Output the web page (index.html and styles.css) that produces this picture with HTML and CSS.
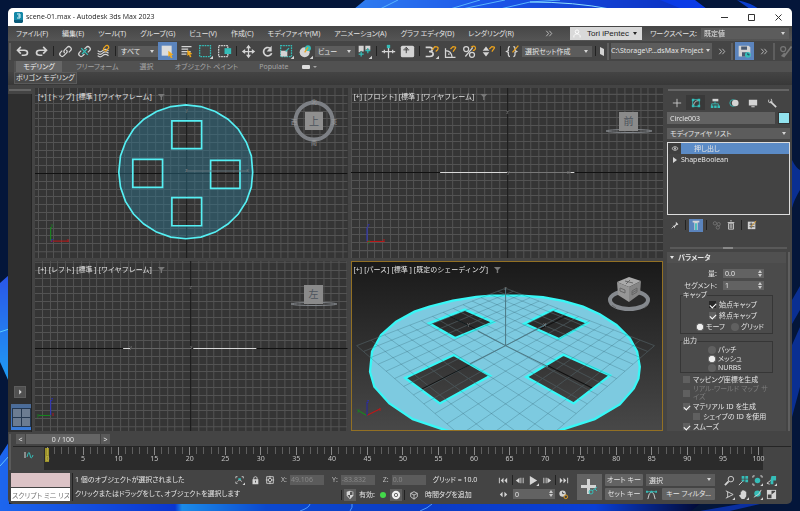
FILE: index.html
```html
<!DOCTYPE html>
<html lang="ja">
<head>
<meta charset="utf-8">
<title>scene-01.max - Autodesk 3ds Max 2023</title>
<link rel="stylesheet" href="styles.css">
</head>
<body>
<svg class="wallpaper" viewBox="0 0 800 511" preserveAspectRatio="none" aria-hidden="true">
  <defs>
    <linearGradient id="wpTop" x1="0" x2="1"><stop offset="0" stop-color="#2f7df0"/><stop offset=".4" stop-color="#1c55e8"/><stop offset="1" stop-color="#0a2fc0"/></linearGradient>
    <linearGradient id="wpLeft" x1="0" x2="0" y1="0" y2="1"><stop offset="0" stop-color="#2a55e8"/><stop offset="1" stop-color="#1f9df5"/></linearGradient>
    <linearGradient id="wpBottom" x1="0" x2="1"><stop offset="0" stop-color="#1d66ee"/><stop offset=".25" stop-color="#0a36cf"/><stop offset=".26" stop-color="#1b8be8"/><stop offset=".38" stop-color="#0c49cf"/><stop offset=".6" stop-color="#0c3cc4"/><stop offset=".85" stop-color="#0a3fd6"/><stop offset="1" stop-color="#020a35"/></linearGradient>
  </defs>
  <rect width="800" height="511" fill="#04163a"/>
  <path d="M354 9 365 0H680l14 9z" fill="url(#wpTop)"/>
  <path d="M380 9 398 0M450 9 480 0M462 9 505 0M500 9 530 2 560 0" stroke="#58b4ff" fill="none"/>
  <path d="M530 2q45 0 80 7" stroke="#8adcff" fill="none"/>
  <path d="M660 0h35l12 9h-25z" fill="#0b3be6"/>
  <path d="M737 0q14 3 22 9h-9z" fill="#0b3fd0"/>
  <path d="M792 160q4 8 8 10v20q-6 10-8 18zM792 300l8-14v24l-8 14zM792 345l8-18v60l-8 30z" fill="#0a2f92"/>
  <path d="M0 283 9 275V382L0 362z" fill="url(#wpLeft)"/>
  <path d="M0 332 9 329" stroke="#58cbff"/>
  <path d="M0 511V456l9-14v62h691l-9 7z" fill="url(#wpBottom)"/>
  <path d="M0 466 9 456" stroke="#63c4ff"/>
  <path d="M420 511q8-3 12-7M300 511q9-3 10-7M350 511q3-4 2-7" stroke="#4f9cff" fill="none"/>
  <path d="M700 511l40-7h20l-30 7z" fill="#0a2fa0"/>
</svg>

<div class="window">
  <header class="titlebar">
    <svg class="app-icon" viewBox="0 0 9 11"><path d="M1 0h7l1 1v9H0V1z" fill="#1488a8"/><path d="M0 8h9v2l-1 1H1l-1-1z" fill="#0b5a78"/><path d="M3 2h3v4H3M4 4h2" stroke="#d8f4fa" fill="none"/></svg>
    <h1>scene-01.max - Autodesk 3ds Max 2023</h1>
    <button class="caption" aria-label="最小化"><svg viewBox="0 0 9 9"><path d="M1 4.500h7" /></svg></button>
    <button class="caption" aria-label="最大化"><svg viewBox="0 0 9 9"><path d="M1.500 1.500h6v6h-6z"/></svg></button>
    <button class="caption" aria-label="閉じる"><svg viewBox="0 0 9 9"><path d="M1.500 1.500l6 6M7.500 1.500l-6 6"/></svg></button>
  </header>

  <nav class="menubar">
    <div class="menus">
      <a href="#">ファイル(F)</a><a href="#">編集(E)</a><a href="#">ツール(T)</a><a href="#">グループ(G)</a><a href="#">ビュー(V)</a><a href="#">作成(C)</a><a href="#">モディファイヤ(M)</a><a href="#">アニメーション(A)</a><a href="#">グラフ エディタ(D)</a><a href="#">レンダリング(R)</a>
    </div>
    <button class="more" aria-label="その他"><svg viewBox="0 0 9 9"><path d="M1 1l3 3.500L1 8M5 1l3 3.500L5 8"/></svg></button>
    <button class="user"><svg viewBox="0 0 9 9"><circle cx="4.500" cy="2.500" r="2"/><path d="M1 9V7l2-2h3l2 2v2"/></svg><span>Tori iPentec</span><i class="tri"></i></button>
    <label for="workspace">ワークスペース:</label>
    <div class="drop workspace"><select id="workspace"><option>既定値</option></select></div>
  </nav>

  <div class="toolbar">
    <i class="grip"></i>
    <button class="tool" aria-label="元に戻す"><svg viewBox="0 0 18 18"><path class="s2" d="M3.500 7.500H11q4 0 4 3t-4 3H8M7 3.500l-4 4 4 4"/></svg></button>
    <button class="tool" aria-label="やり直し"><svg viewBox="0 0 18 18"><path class="s2" d="M14.500 7.500H7q-4 0-4 3t4 3h3M11 3.500l4 4-4 4"/></svg></button>
    <i class="sep"></i>
    <button class="tool" aria-label="リンク"><svg viewBox="0 0 18 18"><path class="s" d="M8 11q-2-2 0-4l3-3q2-2 4 0t0 4l-2 2M10 7q2 2 0 4l-3 3q-2 2-4 0t0-4l2-2"/></svg></button>
    <button class="tool" aria-label="リンク解除"><svg viewBox="0 0 18 18"><path class="s" d="M9 6l2-2q2-2 4 0t0 4l-2 2M9 12l-2 2q-2 2-4 0t0-4l2-2"/><path class="t" d="M5 5l8 8M12 6l-6 6"/></svg></button>
    <button class="tool" aria-label="スペースワープにバインド"><svg viewBox="0 0 18 18"><path class="s" d="M2 8q3 3 6 0t7 0M2 11q3 3 6 0t7 0M2 14q3 3 6 0t7 0"/><path class="o" d="M10 8q-2-2 0-4l2-2q2-1 3 1t-1 3l-3 3"/></svg></button>
    <i class="sep"></i>
    <div class="drop short"><select aria-label="選択フィルタ"><option>すべて</option></select></div>
    <button class="tool on" aria-label="選択"><svg viewBox="0 0 18 18"><path d="M2 2h12v12H2z" fill="#dcdcdc"/><path class="of" d="M10 8l6 5-2.500.5 1.500 3-2 .5-1-3-2 1.500z"/></svg></button>
    <button class="tool" aria-label="名前で選択"><svg viewBox="0 0 18 18"><path class="s" d="M3 3h12M3 6h8M3 9h11M3 12h6"/><path class="of" d="M10 7l6 5-2.500.5 1.500 3-2 .5-1-3-2 1.500z"/></svg></button>
    <button class="tool" aria-label="矩形選択領域"><svg viewBox="0 0 18 18"><path class="t" stroke-dasharray="2 1" d="M2 2h13v13H2z"/><path class="w" d="M18 14v4h-4z"/></svg></button>
    <button class="tool" aria-label="窓交差"><svg viewBox="0 0 18 18"><path class="s" stroke-dasharray="2 1" d="M2 2h11v13H2z"/><path class="tf" d="M9 5h8v7H9z"/></svg></button>
    <i class="sep"></i>
    <button class="tool" aria-label="移動"><svg viewBox="0 0 18 18"><path class="s" d="M9 3v12M3 9h12"/><path class="w" d="M9 1l3 4H6zM9 17l3-4H6zM1 9l4-3v6zM17 9l-4-3v6z"/></svg></button>
    <button class="tool" aria-label="回転"><svg viewBox="0 0 18 18"><path class="s2" d="M12 5A5 5 0 1 0 14 11"/><path class="w" d="M14 2v7H8z"/></svg></button>
    <button class="tool" aria-label="スケール"><svg viewBox="0 0 18 18"><path class="t" stroke-dasharray="2 1" d="M2 2h13v13H2z"/><path class="w" d="M2 8h8v7H2zM18 14v4h-4z"/><path class="t" d="M8 9l4-4"/></svg></button>
    <button class="tool" aria-label="配置"><svg viewBox="0 0 18 18"><circle cx="8" cy="10" r="6" class="w"/><circle cx="12" cy="5" r="3.500" class="tf"/><path class="o" d="M12 4l-4 6"/><path class="w" d="M18 14v4h-4z"/></svg></button>
    <div class="drop short"><select aria-label="参照座標系"><option>ビュー</option></select></div>
    <button class="tool" aria-label="基点中心"><svg viewBox="0 0 18 18"><path class="w" d="M2 2h6v7H6L5 8l-2 2H2zM10 2h6v5h-2l-1-2-2 2h-1zM18 14v4h-4z"/><path class="t" d="M5 9v6M2 12h6M13 5v6M10 8h6"/></svg></button>
    <i class="sep"></i>
    <button class="tool" aria-label="操作"><svg viewBox="0 0 18 18"><path class="s" d="M9 4v13M1 9h16M4 7v4M14 7v4"/><path class="tf" d="M7 1h4v4H7z"/></svg></button>
    <button class="tool" aria-label="キーボード ショートカット"><svg viewBox="0 0 18 18"><rect x="1" y="2" width="16" height="14" rx="2" class="w"/><path d="M7.500 4v7M4 7h7M5.500 6l2-2 2 2" stroke="#333" fill="none"/></svg></button>
    <i class="sep"></i>
    <button class="tool" aria-label="スナップ"><svg viewBox="0 0 18 18"><path class="s2" d="M2 4h5q3 0 3 2.500T6 9q5 0 5 3t-4 3H2"/><path class="o" d="M10 7l3-4q4 0 4 2t-3 4"/><path class="w" d="M18 14v4h-4z"/></svg></button>
    <button class="tool" aria-label="角度スナップ"><svg viewBox="0 0 18 18"><path class="s" d="M3 5v11h12M3 8q7 0 8 8M6 12h2"/><path class="o" d="M9 6l3-3q4 0 3 2l-3 4"/></svg></button>
    <button class="tool" aria-label="パーセント スナップ"><svg viewBox="0 0 18 18"><circle class="s" cx="5" cy="6" r="3"/><circle class="s" cx="12" cy="13" r="3"/><path class="s" d="M13 4L4 15"/><path class="o" d="M11 4q4-3 5 0t-3 4"/></svg></button>
    <button class="tool" aria-label="スピナー スナップ"><svg viewBox="0 0 18 18"><path class="w" d="M6 3l4 5H2zM6 15l4-5H2z"/><path class="o" d="M10 6l3-3q4 0 3 2l-3 4"/></svg></button>
    <i class="sep"></i>
    <button class="tool" aria-label="名前付き選択セット"><svg viewBox="0 0 18 18"><path class="s" d="M6 3Q4 3 4 5v3L2 9l2 1v3q0 2 2 2M10 3q2 0 2 2v3l2 1-2 1v3q0 2-2 2"/><path class="o" d="M16 2l-7 8"/></svg></button>
    <div class="drop long"><select aria-label="選択セット"><option>選択セット作成</option></select></div>
    <i class="sep"></i>
    <svg class="mirror" viewBox="0 0 5 12"><path class="w" d="M1 2l4 2v7L1 9z"/></svg>
    <i class="grip"></i>
    <div class="drop project"><select aria-label="プロジェクト"><option>C:\Storage\P...dsMax Project</option></select></div>
    <button class="more" aria-label="その他のツール"><svg viewBox="0 0 9 9"><path d="M1 1l3 3.500L1 8M5 1l3 3.500L5 8"/></svg></button>
    <i class="grip"></i>
    <button class="tool on" aria-label="自動バックアップ"><svg viewBox="0 0 18 18"><path class="w" d="M2 2h12l2 2v11H2z"/><path d="M5 3h7v4H5zM6 10h7v5H6z" fill="#4a5a70"/><circle cx="13" cy="13" r="3.500" class="tf"/><path d="M13 11v2h2" stroke="#224" fill="none"/></svg></button>
    <button class="more" aria-label="その他の保存"><svg viewBox="0 0 9 9"><path d="M1 1l3 3.500L1 8M5 1l3 3.500L5 8"/></svg></button>
    <i class="grip"></i>
    <button class="tool dim" aria-label="ブラシ"><svg viewBox="0 0 18 18"><circle class="s" cx="5" cy="6" r="3"/><path class="s2" d="M15 3l-6 8-3 4-2-1 3-3"/></svg></button>
  </div>

  <div class="ribbon">
    <div class="tabs">
      <button class="tab active">モデリング</button><button class="tab">フリーフォーム</button><button class="tab">選択</button><button class="tab">オブジェクト ペイント</button><button class="tab">Populate</button><i class="pill"></i><i class="tri"></i>
    </div>
    <div class="subtabs"><button>ポリゴン モデリング</button></div>
  </div>

  <div class="workarea">
    <aside class="layouts">
      <i class="hgrip"></i>
      <div class="layout-strip">
        <button class="expand" aria-label="展開"><svg viewBox="0 0 12 12"><path class="w" d="M5 3l3 3-3 3z"/></svg></button>
        <button class="quad" aria-label="4 画面レイアウト"><i></i><i></i><i></i><i></i></button>
      </div>
    </aside>

    <main class="viewports">
      <section class="view">
        <svg class="scene" viewBox="0 0 312 170" preserveAspectRatio="xMidYMid slice">
          <path class="grid" data-x="151.500" data-y="85.500"/>
          <path class="axis" d="M151.500 0V170M0 85.500H312"/>
          <g transform="translate(-35 -3) scale(.33333)">
            <path class="disc-flat" fill-rule="evenodd" d="M757 262 753 306 738 349 714 387 683 417 645 441 602 456 557 461 512 456 469 441 431 417 400 387 376 349 361 306 356 262 361 213 376 172 400 133 431 103 469 80 512 65 557 60 602 65 645 80 683 103 714 133 738 172 753 213zM515 108v83h89v-83zM398 223v84h89v-84zM631 226v84h88v-84zM515 338v84h89v-84z"/>
            <path d="M559 258H742" stroke="#65767e" stroke-width="3"/>
            <path stroke="#12931b" d="M152 468V426"/><path stroke="#c01616" d="M152 468H206"/>
            <text x="152" y="427" fill="#168a1e">y</text><text x="199" y="472" fill="#c01616">x</text><text x="153" y="472" fill="#2323c0">z</text>
            <g class="marks"><text x="555" y="82">y</text><text x="554" y="261">z</text><text x="738" y="262">x</text></g>
          </g>
        </svg>
        <div class="vlabel"><span>[+]</span><span>[トップ]</span><span>[標準 ]</span><span>[ワイヤフレーム]</span><i class="filter"></i></div>
        <svg class="cube" viewBox="0 0 48 48"><circle cx="24" cy="24" r="18.500" fill="none" stroke="#7d8085" stroke-width="4"/><rect x="15" y="15" width="18" height="18" fill="#8f8f8f"/><text x="19" y="28">上</text><g class="compass"><text x="21" y="7">北</text><text x="21" y="48">南</text><text x="1" y="27">西</text><text x="41" y="27">東</text></g></svg>
      </section>

      <section class="view">
        <svg class="scene" viewBox="0 0 312 170" preserveAspectRatio="xMidYMid slice">
          <path class="grid" data-x="156.500" data-y="84.500"/>
          <path class="axis" d="M156.500 0V170M0 84.500H312"/>
          <path d="M89 84.500H156M219 84.500h4" stroke="#d8d8d8"/><path d="M157 84.500h62" stroke="#777"/>
          <g transform="translate(-10 -3) scale(.33333)">
            <path stroke="#2f36c9" d="M78 469V426"/><path stroke="#c01616" d="M78 469H130"/>
            <text x="79" y="427" fill="#2a2ac8">z</text><text x="125" y="472" fill="#c01616">x</text><text x="80" y="473" fill="#168a1e">y</text>
            <g class="marks"><text x="495" y="86">z</text><text x="497" y="267">y</text><text x="677" y="266">x</text></g>
          </g>
        </svg>
        <div class="vlabel"><span>[+]</span><span>[フロント]</span><span>[標準 ]</span><span>[ワイヤフレーム]</span><i class="filter"></i></div>
        <svg class="cube" viewBox="0 0 48 48"><ellipse cx="24" cy="34" rx="23" ry="1.500" fill="none" stroke="#85898e"/><rect x="14" y="15" width="19" height="19" fill="#8a8a8a"/><text x="18.500" y="28">前</text></svg>
      </section>

      <section class="view">
        <svg class="scene" viewBox="0 0 312 170" preserveAspectRatio="xMidYMid slice">
          <path class="grid" data-x="155.500" data-y="87.500"/>
          <path class="axis" d="M155.500 0V170M0 87.500H312"/>
          <path d="M88 87.500h7M158 87.500h63" stroke="#d8d8d8"/><path d="M96 87.500h60" stroke="#666"/>
          <g transform="translate(-35 -6) scale(.33333)">
            <path stroke="#2f36c9" d="M152 481V435"/><path stroke="#168a1e" d="M152 481H116"/>
            <text x="152" y="438" fill="#2a2ac8">z</text><text x="155" y="483" fill="#c01616">x</text><text x="110" y="485" fill="#168a1e">y</text>
            <g class="marks"><text x="568" y="101">z</text><text x="388" y="281">y</text><text x="569" y="281">x</text></g>
          </g>
        </svg>
        <div class="vlabel"><span>[+]</span><span>[レフト]</span><span>[標準 ]</span><span>[ワイヤフレーム]</span><i class="filter"></i></div>
        <svg class="cube" viewBox="0 0 48 48"><ellipse cx="24" cy="34" rx="23" ry="1.500" fill="none" stroke="#85898e"/><rect x="14" y="15" width="19" height="19" fill="#8a8a8a"/><text x="18.500" y="28">左</text></svg>
      </section>

      <section class="view active">
        <svg class="scene" viewBox="0 0 312 170" preserveAspectRatio="xMidYMid slice">
          <g transform="translate(-5 -6) scale(.33333)">
            <path class="plane far"/>
            <path d="M225 403 665 180M310 183 755 408" stroke="#111" stroke-width="4"/>
            <path class="disc" fill-rule="evenodd" d="M435 122H525L590 127 650 138 710 155 760 178 810 210 850 250 872 290 880 335 876 370 862 400 820 448 745 492 640 526 560 545H390L300 526 200 492 130 445 85 395 72 350 78 290 105 240 150 200 205 170 250 155 320 137 390 126zM356 164 441 202 327 249 249 205zM620 164 724 204 638 252 534 206zM323 300 432 362 281 445 177 369zM651 299 791 361 682 445 540 366z"/>
            <path class="plane near"/>
            <path d="M478 272 395 228M478 272 600 208M478 272V100M478 272 372 326M478 272 605 335" stroke="#4d7884" stroke-width="3"/>
            <path stroke="#c01616" stroke-width="4" d="M62 481 103 461"/><path stroke="#168a1e" stroke-width="4" d="M62 481 36 466"/><path stroke="#2626a8" stroke-width="5" d="M63 481V440"/>
            <text x="62" y="443" fill="#2a2ac8">z</text><text x="98" y="467" fill="#c01616">x</text><text x="33" y="470" fill="#168a1e">y</text>
            <g class="marks"><text x="474" y="105">z</text><text x="362" y="217">Y</text><text x="590" y="216">X</text></g>
          </g>
        </svg>
        <div class="vlabel"><span>[+]</span><span>[パース]</span><span>[標準 ]</span><span>[既定のシェーディング]</span><i class="filter"></i></div>
        <svg class="cube" viewBox="0 0 48 48"><ellipse cx="24" cy="30" rx="19" ry="9" fill="#2a2a2a" stroke="#85898e" stroke-width="4"/><path d="M12 12l12-5 12 4-12 6z" fill="#aaa"/><path d="M12 12l12 5v15l-11-7z" fill="#969696"/><path d="M36 11l-12 6v15l11-8z" fill="#858585"/><path d="M20 11l8 2M25 10l-4 4M15 18l5 2v3l-5-2zM27 21l5-3v4l-5 3zM27 23l5-3M7 35l4 3M39 38l4-3" stroke="#666" fill="none"/></svg>
      </section>
    </main>

    <aside class="panel">
      <i class="hgrip"></i>
      <div class="ptabs">
        <button aria-label="作成"><svg viewBox="0 0 12 12"><path class="s" d="M6 1v10M1 6h10"/></svg></button>
        <button class="cur" aria-label="修正"><svg viewBox="0 0 12 12"><path class="t" d="M2 2h8v8H2z"/><path class="s" d="M3 10q0-6 6-7"/><path class="tf" d="M1 1h3v3H1zM8 1h3v3H8zM1 8h3v3H1zM8 8h3v3H8z"/></svg></button>
        <button aria-label="階層"><svg viewBox="0 0 12 12"><path class="w" d="M3 1h7v3H3z"/><path class="t" d="M6 4v3M2 10V7h8v3"/><path class="tf" d="M1 9h3v3H1zM5 9h3v3H5zM9 9h3v3H9z"/></svg></button>
        <button aria-label="モーション"><svg viewBox="0 0 12 12"><circle class="t" cx="5" cy="6" r="4"/><circle class="w" cx="7.500" cy="6" r="4"/></svg></button>
        <button aria-label="表示"><svg viewBox="0 0 12 12"><path class="w" d="M1 2h10v7H1zM4 10h4v1H4z"/></svg></button>
        <button aria-label="ユーティリティ"><svg viewBox="0 0 12 12"><path class="s2" d="M4 4l7 7"/><path class="s" d="M2 2v3l2 1 2-2-1-3"/></svg></button>
      </div>
      <div class="name-row"><input type="text" value="Circle003" aria-label="オブジェクト名"><button class="swatch" aria-label="カラー"></button></div>
      <div class="drop modlist"><select aria-label="モディファイヤ リスト"><option>モディファイヤ リスト</option></select></div>
      <ul class="stack">
        <li class="sel"><span class="eye"><svg viewBox="0 0 9 7"><path class="s" d="M1 3.500q3.500-4 7 0-3.500 4-7 0"/><circle cx="4.500" cy="3.500" r="1" class="w"/></svg></span><span>押し出し</span></li>
        <li><svg class="arrow" viewBox="0 0 4 6"><path class="w" d="M0 0l4 3-4 3z"/></svg><span>ShapeBoolean</span></li>
      </ul>
      <div class="stack-tools">
        <button aria-label="固定"><svg viewBox="0 0 12 12"><path class="w" d="M7 2l3 3-1 1-1 0-2 2v2L3 7h2l2-2z"/><path class="s" d="M4 8l-2 2"/></svg></button><i class="sep"></i>
        <button class="on" aria-label="最終結果"><svg viewBox="0 0 12 12"><path class="w" d="M2 1h8v2H2zM4 3h4v9H4z"/><path class="tf" d="M5 4h2v8H5z"/></svg></button><i class="sep"></i>
        <button class="dim" aria-label="固有にする"><svg viewBox="0 0 12 12"><circle class="s" cx="3.500" cy="4" r="2"/><circle class="s" cx="8" cy="5" r="2"/><circle class="s" cx="7" cy="9" r="2"/></svg></button>
        <button aria-label="除去"><svg viewBox="0 0 12 12"><path class="s" d="M3 4h6v7H3zM2 3h8M5 1h2M5 5v5M7 5v5"/></svg></button><i class="sep"></i>
        <button aria-label="設定"><svg viewBox="0 0 12 12"><path class="w" d="M1 2h9v9H1z"/><path d="M3 5h6M3 8h6M5 3v7" stroke="#444"/><path class="o" d="M11 1L5 8"/></svg></button>
      </div>
      <div class="splitter"><i></i></div>
      <div class="scroll">
        <form class="rollout">
          <h2><i class="tri"></i>パラメータ</h2>
          <div class="prow"><label for="amount">量:</label><span class="spin"><input id="amount" value="0.0"></span></div>
          <div class="prow"><label for="segs">セグメント:</label><span class="spin"><input id="segs" value="1"></span></div>
          <fieldset class="cap"><legend>キャップ</legend>
            <label class="in"><input type="checkbox" class="dark" checked>始点キャップ</label>
            <label class="in"><input type="checkbox" checked>終点キャップ</label>
            <div class="pair"><label><input type="radio" name="cap" checked>モーフ</label><label><input type="radio" name="cap">グリッド</label></div>
          </fieldset>
          <fieldset class="out"><legend>出力</legend>
            <label class="in"><input type="radio" name="out">パッチ</label>
            <label class="in"><input type="radio" name="out" checked>メッシュ</label>
            <label class="in"><input type="radio" name="out">NURBS</label>
          </fieldset>
          <div class="checks">
            <label><input type="checkbox">マッピング座標を生成</label>
            <label class="off"><input type="checkbox" disabled><span>リアル-ワールド マップ サイズ</span></label>
            <label><input type="checkbox" checked>マテリアル ID を生成</label>
            <label class="sub"><input type="checkbox">シェイプの ID を使用</label>
            <label><input type="checkbox" checked>スムーズ</label>
          </div>
        </form>
        <i class="bar"></i>
      </div>
    </aside>
  </div>

  <div class="timebar">
    <i class="grip"></i>
    <div class="timemain">
      <div class="slider"><button>&lt;</button><button class="thumb">0 / 100</button><button>&gt;</button></div>
      <div class="trackrow">
        <button class="curve" aria-label="ミニ カーブ エディタ"><svg viewBox="0 0 10 8"><path class="s" d="M1 1v6"/><path class="t" d="M3 6q2-8 3-2t3 0"/></svg></button>
        <div class="track"><div class="ruler"></div><i class="now"></i></div>
      </div>
    </div>
  </div>

  <footer class="status">
    <div class="script"><i></i><input aria-label="MAXScript ミニ リスナー" value="スクリプト ミニ リス"></div>
    <i class="sep tall"></i>
    <div class="messages"><p>1 個のオブジェクトが選択されました</p><p>クリックまたはドラッグをして、オブジェクトを選択します</p></div>
    <div class="coords">
      <div class="crow">
        <button aria-label="選択を分離"><svg viewBox="0 0 12 12"><path class="s" d="M1 4V2h2M8 2h2v2M1 8v2h2M3 8q3-4 5 0"/><path class="tf" d="M4 4h3v2H4z"/><path class="w" d="M12 9v3H9z"/></svg></button>
        <button aria-label="ロック"><svg viewBox="0 0 12 12"><path class="w" d="M3 5h7v6H3z"/><path class="s" d="M4.500 6V3q2-2 4 0v3"/><path d="M6 7h1v2H6z" fill="#333"/></svg></button>
        <button aria-label="絶対座標"><svg viewBox="0 0 12 12"><path class="s" d="M2 2h8v8H2z"/><circle class="s" cx="6" cy="6" r="2"/><path class="s" d="M6 1v3M6 8v3M1 6h3M8 6h3"/></svg></button>
        <label for="cx">X:</label><input id="cx" value="49.106"><label for="cy">Y:</label><input id="cy" value="-83.832"><label for="cz">Z:</label><input id="cz" value="0.0"><span class="gridsize">グリッド = 10.0</span>
      </div>
      <div class="crow second">
        <i class="sep"></i><button class="raised" aria-label="品質"><svg viewBox="0 0 12 12"><path class="w" d="M2 2l4-1 4 1v5l-4 4-4-4z"/><path d="M6 2h3v4H6zM3 6h3v4z" fill="#555"/></svg></button>
        <span>有効:</span><i class="led"></i><button class="raised" aria-label="表示を有効化"><svg viewBox="0 0 12 12"><circle cx="6" cy="6" r="5" fill="#eee"/><circle cx="6" cy="6" r="2" fill="none" stroke="#555"/></svg></button><i class="sep"></i>
        <button aria-label="時間タグ"><svg viewBox="0 0 12 12"><path class="s" d="M6 2l4 2v4l-4 3-4-3V4zM2 4l4 2 4-2M6 6v5"/></svg></button><span>時間タグを追加</span>
      </div>
    </div>
    <div class="play">
      <div class="prow1">
        <button aria-label="先頭へ"><svg viewBox="0 0 12 12"><path class="s" d="M1.500 3v6"/><path class="w" d="M6 3v6L3 6zM10 3v6L7 6z"/></svg></button><i class="sep"></i>
        <button aria-label="前のフレーム"><svg viewBox="0 0 12 12"><path class="w" d="M6 3v6L2 6z"/><path class="s" d="M7.500 3v6M10 3v6"/></svg></button>
        <button aria-label="再生"><svg viewBox="0 0 12 12"><path class="w" d="M2 1l8 5-8 5zM12 9v3H9z"/></svg></button>
        <button aria-label="次のフレーム"><svg viewBox="0 0 12 12"><path class="w" d="M6 3v6l4-3z"/><path class="s" d="M2 3v6M4.500 3v6"/></svg></button><i class="sep"></i>
        <button aria-label="最後へ"><svg viewBox="0 0 12 12"><path class="s" d="M10.500 3v6"/><path class="w" d="M2 3v6l3-3zM6 3v6l3-3z"/></svg></button>
      </div>
      <div class="prow1">
        <button aria-label="キー モード"><svg viewBox="0 0 12 12"><path class="w" d="M5 3v6L2 6zM7 3v6l3-3z"/></svg></button>
        <span class="spin frame"><input aria-label="フレーム" value="0"></span>
        <button aria-label="時間設定"><svg viewBox="0 0 12 12"><circle class="w" cx="5" cy="5" r="3.500"/><path d="M5 3v2h2" stroke="#444" fill="none"/><circle class="o" cx="8.500" cy="8.500" r="2"/></svg></button>
      </div>
    </div>
    <button class="setkeys" aria-label="キーを設定"><svg viewBox="0 0 25 26"><path class="w" d="M10 5h3v6h6v3h-6v6h-3v-6H4v-3h6z"/><circle class="t" cx="14" cy="18" r="2"/><path class="t" d="M15 17l5-4M18 15l2 2"/></svg></button>
    <div class="keys"><button>オート キー</button><button>セット キー</button></div>
    <div class="filters">
      <div class="drop keysel"><select aria-label="キー対象"><option>選択</option></select></div>
      <div class="frow"><button class="plain" aria-label="接線"><svg viewBox="0 0 12 12"><path class="s" d="M2 11q1-7 4-8 3 1 4 8"/><path class="t" d="M1 3h9"/><path class="tf" d="M0 2h2v2H0zM5 2h2v2H5zM10 2h2v2h-2z"/></svg></button><button>キー フィルタ...</button></div>
    </div>
    <div class="nav">
      <button aria-label="ズーム"><svg viewBox="0 0 12 12"><circle class="s" cx="7.500" cy="4.500" r="3"/><path class="s2" d="M5 7l-4 4"/></svg></button>
      <button aria-label="すべてズーム"><svg viewBox="0 0 12 12"><path class="tf" d="M4 1h3v3H4zM8 1h3v3H8zM8 5h3v3H8zM4 5h3v2H4z"/><path class="s" d="M5 7l-4 4"/></svg></button>
      <button aria-label="全範囲ズーム"><svg viewBox="0 0 12 12"><path class="s" d="M1 3V1h2M9 1h2v2M1 9v2h2"/><circle class="tf" cx="6" cy="6" r="3"/><path class="w" d="M12 9v3H9z"/></svg></button>
      <button aria-label="選択範囲ズーム"><svg viewBox="0 0 12 12"><path class="tf" d="M6 1h5v5H8v4H5V5z"/><path class="s" d="M5 6l-4 3 3 1"/><path class="w" d="M12 9v3H9z"/></svg></button>
      <button aria-label="視野"><svg viewBox="0 0 12 12"><path class="s" d="M2 2l8 4-8 4M4 3v6"/><path class="w" d="M12 9v3H9z"/></svg></button>
      <button aria-label="パン"><svg viewBox="0 0 12 12"><path class="w" d="M3 3h1V2h1V1h1v1h2v1h1v5L7 11H4L1 7l2-1zM12 9v3H9z"/></svg></button>
      <button aria-label="オービット"><svg viewBox="0 0 12 12"><circle class="tf" cx="6" cy="5" r="3.500"/><path class="s" d="M10 1q-1 5-8 8"/><path class="w" d="M12 9v3H9z"/></svg></button>
      <button aria-label="ビューポート最大化"><svg viewBox="0 0 12 12"><path class="w" d="M1 1h10v10H1z"/><path d="M2 6h4v4H2zM6 2h4v1L6 6z" fill="#444"/></svg></button>
    </div>
  </footer>
</div>
<script src="script.js"></script>
</body>
</html>
```

FILE: styles.css
```css
* { box-sizing: border-box; margin: 0; padding: 0; }
body {
  height: 100vh;
  padding: 8px 8px 7px;
  display: flex;
  background: #04163a;
  color: #e4e4e4;
  font-family: "Noto Sans", "Noto Sans CJK JP", sans-serif;
  font-size: 7px;
  line-height: 10px;
  font-feature-settings: "palt";
  overflow: hidden;
}
button, input, select { font: inherit; color: inherit; font-feature-settings: inherit; border: 0; background: none; min-width: 0; }
svg { display: block; overflow: visible; }
a { color: inherit; text-decoration: none; white-space: nowrap; }
i { display: block; flex: none; }
ul { list-style: none; }

.s, .s2, .t, .o { fill: none; stroke: #d4d4d4; }
.s2 { stroke-width: 2; }
.t { stroke: #35bdb8; }
.o { stroke: #e9a11d; }
.of { fill: #f0aa1e; }
.tf { fill: #35bdb8; }
.w { fill: #d4d4d4; }
.tool .s, .tool .t, .tool .o { stroke-width: 1.5; }
.dim { opacity: .35; }

.wallpaper { position: fixed; inset: 0; width: 100%; height: 100%; }
.window {
  position: relative;
  flex: 1;
  min-width: 0;
  display: flex;
  flex-direction: column;
  background: #444;
  border-radius: 5px;
  overflow: hidden;
}

.titlebar { display: flex; align-items: center; height: 18px; padding-left: 6px; background: #fff; color: #222; flex: none; }
.titlebar h1 { flex: 1; font: 7px/12px "Open Sans", sans-serif; }
.app-icon { width: 9px; height: 11px; margin-right: 3px; }
.caption { width: 27px; height: 18px; display: grid; place-items: center; }
.caption svg { width: 9px; height: 9px; fill: none; stroke: #333; }

.menubar { display: flex; align-items: center; height: 15px; padding-left: 8px; background: linear-gradient(#464646, #555); flex: none; }
.menus { display: flex; gap: 14px; flex: 1; }
.more { width: 19px; height: 12px; display: grid; place-items: center; flex: none; }
.more svg { width: 8px; height: 7px; fill: none; stroke: #d4d4d4; }
.menubar .more { margin-right: 12px; }
.user { display: flex; align-items: center; flex: none; height: 13px; width: 72px; background: #d9d9d9; color: #222; padding: 0 5px 0 3px; margin-right: 17px; font: 8px/13px "Liberation Sans", sans-serif; white-space: nowrap; }
.user svg { width: 8px; height: 9px; fill: none; stroke: #fff; margin-right: 2px; }
.user span { flex: 1; }
.tri { width: 0; height: 0; border: 2px solid transparent; border-top: 3px solid currentColor; border-bottom: 0; }
.menubar label { margin-right: 4px; white-space: nowrap; width: 38px; display: flex; justify-content: flex-end; }

.drop { position: relative; height: 11px; background: #5c5c5c; flex: none; }
.drop select { appearance: none; display: block; width: 100%; height: 100%; padding: 0 3px; line-height: 11px; }
.drop::after { content: ""; position: absolute; right: 4px; top: 4px; border: 2px solid transparent; border-top: 3px solid #d4d4d4; border-bottom: 0; pointer-events: none; }
.workspace { width: 88px; margin-right: 3px; }

.toolbar { display: flex; align-items: center; height: 20px; padding-left: 1px; background: #454545; flex: none; }
.tool { width: 19px; height: 18px; display: grid; place-items: center; flex: none; }
.tool svg { width: 15px; height: 15px; }
.tool.on { background: #5b84bd; }
.grip { width: 2px; height: 17px; background: #5e5e5e; margin-right: 2px; }
.sep { width: 1px; height: 10px; background: #222; margin: 0 2px; }
.short { width: 40px; }
.long { width: 70px; margin-right: 1px; }
.mirror { width: 5px; height: 12px; margin: 0 3px 0 1px; flex: none; }
.project { width: 101px; height: 16px; }
.project select { line-height: 16px; padding: 0; }
.project::after { top: 6px; right: 2px; }

.ribbon { flex: none; background: #474747; }
.tabs { display: flex; align-items: center; height: 11px; padding-left: 8px; background: #515151; color: #a5a5a5; margin: 0 0 0 6px; }
.tab { height: 11px; line-height: 10px; margin-right: 21px; white-space: nowrap; }
.tab.active { background: #666; color: #eee; width: 46px; margin: 0 14px 0 -6px; }
.pill { width: 8px; height: 4px; background: #ddd; margin: 0 3px 0 -7px; border-radius: 1px; }
.tabs .tri { border-width: 2px 2px 0; }
.subtabs { height: 13px; padding: 0 6px; background: linear-gradient(#444, #383838); }
.subtabs button { height: 12px; line-height: 10px; border: 1px solid #5a5a5a; padding: 0 1px; background: #484848; white-space: nowrap; }

.workarea { flex: 1; min-height: 0; display: flex; gap: 3px; }
.layouts { width: 24px; flex: none; display: flex; flex-direction: column; padding-top: 4px; }
.hgrip { height: 2px; background: #656565; margin: 0 1px 3px; }
.layout-strip { flex: 1; background: #2f2f2f; display: flex; flex-direction: column; justify-content: flex-end; align-items: center; gap: 6px; padding-bottom: 2px; border-right: 1px solid #252525; }
.expand { width: 12px; height: 12px; background: #505050; border: 1px solid #5d5d5d; }
.expand svg { width: 10px; height: 10px; }
.quad { align-self: stretch; margin-left: 3px; height: 26px; background: linear-gradient(#4d6b93, #397dde); display: grid; grid-template: 8px 8px / 8px 8px; gap: 1px; place-content: center; }
.quad i { background: #6c7c91; outline: 1px solid #24374f; }

.viewports { flex: 1; min-width: 0; display: grid; grid-template: 1fr 1fr / 1fr 1fr; gap: 3px; padding: 3px 0 1px; }
.view { position: relative; min-height: 0; min-width: 0; background: #353535; overflow: hidden; }
.view.active { background: linear-gradient(#191919, #484848); }
.view.active::after { content: ""; position: absolute; inset: 0; border: 1px solid #927024; pointer-events: none; }
.scene { position: absolute; inset: 0; width: 100%; height: 100%; fill: none; }
.scene text { font: 15px "Liberation Sans", sans-serif; }
.scene g > path { stroke-width: 3; }
.marks text { fill: #808080; }
.grid { stroke: #535353; }
.axis { stroke: #111; }
.scene .disc-flat { fill: #2d7590; fill-opacity: .45; stroke: #55f0f4; stroke-width: 5; }
.scene .disc { fill: #7dcae0; stroke: #37f7f6; stroke-width: 7; }
.scene .plane { stroke: #626262; stroke-width: 2; }
.scene .near { stroke: #204753; stroke-opacity: .35; }
.vlabel { position: relative; display: flex; gap: 2px; padding: 4px 3px; line-height: 10px; white-space: nowrap; font-feature-settings: normal; }
.filter { width: 7px; height: 6px; background: #777; clip-path: polygon(0 0, 100% 0, 60% 50%, 60% 100%, 40% 100%, 40% 50%); margin: 2px 4px; }
.cube { position: absolute; right: 10px; top: 9px; width: 48px; height: 48px; }
.cube text { font: 10px "Noto Sans CJK JP", sans-serif; fill: #4c535c; }
.cube .compass text { font-size: 6px; fill: #999; }

.panel { width: 126px; flex: none; display: flex; flex-direction: column; padding: 4px 2px 1px 1px; min-height: 0; }
.ptabs { display: flex; height: 17px; padding: 1px 0; flex: none; }
.ptabs button { width: 19px; display: grid; place-items: center; }
.ptabs .cur { background: #393939; }
.ptabs svg { width: 10px; height: 10px; }
.name-row { display: flex; gap: 3px; margin-top: 1px; flex: none; }
.name-row input { flex: 1; height: 12px; padding: 0 3px; background: #626262; }
.swatch { width: 12px; height: 12px; background: #92e3ef; border: 1px solid #333; }
.modlist { height: 11px; margin: 4px 0 3px; }
.stack { height: 73px; border: 1px solid #ddd; flex: none; background: #434343; }
.stack li { display: flex; align-items: center; height: 11px; }
.stack .sel { background: #5b8bc6; gap: 13px; }
.eye { width: 13px; height: 11px; background: #3f3f3f; padding: 2px 3px; }
.eye svg { width: 8px; height: 7px; }
.arrow { width: 4px; height: 6px; margin: 0 4px 0 5px; }
.stack-tools { display: flex; align-items: center; height: 20px; padding-left: 1px; flex: none; }
.stack-tools button { width: 14px; height: 13px; display: grid; place-items: center; }
.stack-tools button.on { background: #5b84bd; }
.stack-tools svg { width: 10px; height: 10px; }
.stack-tools .sep { margin: 0 3px; }
.splitter { height: 17px; padding: 12px 3px 0; flex: none; }
.splitter i { height: 2px; background: linear-gradient(90deg, #595959 45%, #888 45% 54%, #595959 54%); }
.scroll { flex: 1; min-height: 0; display: flex; gap: 2px; overflow: hidden; }
.rollout { flex: 1; background: #4b4b4b; overflow: hidden; }
.bar { width: 2px; background: #5f5f5f; }
.rollout h2 { display: flex; align-items: center; gap: 4px; font-size: 7px; line-height: 11px; padding-left: 3px; background: #505050; margin-bottom: 4px; }
.prow { display: flex; align-items: center; height: 12px; padding-right: 22px; }
.prow label { flex: 1; justify-content: flex-end; padding-right: 6px; }
.spin { position: relative; width: 41px; height: 9px; background: #626262; }
.spin input { display: block; width: 100%; height: 100%; padding: 0 2px; line-height: 9px; }
.spin::before, .spin::after { content: ""; position: absolute; right: 2px; top: 1px; border: 2px solid transparent; border-top: 0; border-bottom: 3px solid #ccc; }
.spin::after { top: 5px; border-top: 3px solid #ccc; border-bottom: 0; }
fieldset { border: 1px solid #363636; margin: 0 13px; min-width: 0; }
fieldset legend { margin-left: 2px; line-height: 8px; }
.rollout label { display: flex; align-items: center; white-space: nowrap; line-height: 9px; }
.cap .in { padding-left: 28px; height: 11px; }
.out .in { padding-left: 27px; height: 9px; }
.out { margin-top: 3px; }
.pair { display: flex; justify-content: space-between; padding: 1px 8px 2px 15px; }
.rollout input[type] { appearance: none; flex: none; width: 7px; height: 7px; background: #606060; margin-right: 3px; display: grid; place-items: center; }
.rollout input[type=radio] { border-radius: 50%; width: 8px; height: 8px; margin-right: 2px; }
.rollout input[type=radio]:checked { background: radial-gradient(#eee 50%, #707070 60%); }
.rollout input[type=checkbox]:checked::after { content: ""; width: 5px; height: 3px; border: solid #fff; border-width: 0 0 1px 1px; rotate: -45deg; }
.rollout input.dark[type] { background: #272727; }
.checks { display: flex; flex-direction: column; gap: 1px; padding: 2px 16px 0; }
.checks .off { color: #7c7c7c; white-space: normal; line-height: 8px; }
.checks .sub { padding-left: 10px; }

.timebar { flex: none; display: flex; padding: 2px 1px; }
.timebar .grip { height: auto; background: #5a5a5a; }
.timemain { flex: 1; min-width: 0; }
.slider { display: flex; gap: 1px; height: 12px; padding-left: 3px; }
.slider button { width: 9px; height: 10px; background: #5a5a5a; line-height: 9px; text-align: center; }
.slider .thumb { width: 74px; background: #656565; }
.trackrow { display: flex; height: 24px; border-top: 1px solid #252525; padding-right: 28px; }
.curve { width: 31px; display: grid; place-items: center; padding-bottom: 7px; }
.curve svg { width: 10px; height: 8px; }
.track { position: relative; flex: 1; background: #2b2b2b; padding: 0 3px; }
.ruler { display: flex; justify-content: space-between; height: 23px; line-height: 23px; }
.ruler span { width: 1px; height: 7px; background: #5f5f5f; }
.ruler b { position: relative; display: flex; justify-content: center; width: 1px; font-weight: 400; color: #c4c4c4; }
.ruler .major { position: absolute; left: 0; top: 0; height: 8px; background: #888; }
.ruler em { font-style: normal; }
.now { position: absolute; left: 1px; top: 1px; width: 4px; height: 14px; background: #c3b52b; opacity: .75; }

.status { flex: none; display: flex; align-items: center; height: 32px; padding: 0 12px 2px 3px; }
.script { width: 59px; flex: none; }
.script i { height: 14px; background: #dcc3c6; margin-bottom: 1px; }
.script input { display: block; width: 100%; height: 13px; background: #fff; color: #777; padding: 0 1px; }
.tall { height: 28px; }
.messages { flex: 1; min-width: 0; white-space: nowrap; display: grid; gap: 4px; }
.coords { width: 258px; flex: none; display: grid; gap: 1px; }
.crow { display: flex; align-items: center; height: 14px; white-space: nowrap; }
.crow button { width: 15px; height: 12px; display: grid; place-items: center; }
.crow svg { width: 10px; height: 10px; }
.crow label { margin: 0 3px 0 4px; color: #bbb; }
.crow input { width: 34px; height: 10px; background: #5b5b5b; color: #888; padding: 0 1px; margin-right: 4px; }
.gridsize { margin-left: 3px; }
.second { padding-left: 107px; }
.second .raised { background: #5e5e5e; width: 12px; }
.second span { margin: 0 3px; }
.led { width: 6px; height: 6px; border-radius: 50%; background: #43d84a; margin: 0 4px 0 2px; }
.play { width: 72px; flex: none; display: grid; gap: 1px; margin-left: 8px; }
.prow1 { display: flex; align-items: center; justify-content: space-between; height: 13px; }
.prow1 button { width: 12px; height: 12px; }
.prow1 svg { width: 11px; height: 11px; }
.prow1 .sep { margin: 0; }
.spin.frame { width: 42px; height: 10px; }
.setkeys { width: 25px; height: 26px; flex: none; background: #636363; margin: 0 3px 0 7px; }
.keys { display: grid; gap: 2px; width: 38px; flex: none; }
.keys button, .frow button { height: 12px; background: #636363; border-radius: 1px; white-space: nowrap; }
.filters { width: 69px; flex: none; margin: 0 9px 0 3px; display: grid; gap: 2px; }
.keysel { height: 12px; }
.frow { display: flex; gap: 2px; }
.frow button { flex: 1; }
.frow .plain { flex: none; width: 14px; background: none; }
.frow svg { width: 11px; height: 11px; }
.nav { display: grid; grid-template-columns: repeat(4, 14px); row-gap: 2px; flex: none; }
.nav button { width: 12px; height: 12px; }
.nav svg { width: 11px; height: 11px; }
```

FILE: script.js
```js
// Orthographic grids, centred on each view's axes.
const STEP = 7.8;
document.querySelectorAll('.grid').forEach((path) => {
  const cx = Number(path.dataset.x);
  const cy = Number(path.dataset.y);
  let d = '';
  for (let i = -22; i <= 22; i++) {
    const x = Math.floor(cx + i * STEP) + 0.5;
    const y = Math.floor(cy + i * STEP) + 0.5;
    if (x > 0 && x < 312) d += `M${x} 0V170`;
    if (y > 0 && y < 170) d += `M0 ${y}H312`;
  }
  path.setAttribute('d', d);
});

// Ground plane of the perspective view.
const CELLS = 7;
function project(a, b) {
  const u = (a - b) / (2 * CELLS);
  const v = (a + b) / (2 * CELLS);
  const w = 1 + 0.384 * v;
  return `${(478 + (446 * u) / w).toFixed(1)} ${(-348 + 620 / w).toFixed(1)}`;
}
let plane = '';
for (let i = -CELLS; i <= CELLS; i++) {
  plane += `M${project(i, -CELLS)}L${project(i, CELLS)}M${project(-CELLS, i)}L${project(CELLS, i)}`;
}
document.querySelectorAll('.plane').forEach((path) => path.setAttribute('d', plane));

// Frame ruler.
const ruler = document.querySelector('.ruler');
for (let f = 0; f <= 100; f++) {
  const mark = document.createElement(f % 5 ? 'span' : 'b');
  if (f % 5 === 0) {
    const tick = document.createElement('span');
    tick.className = 'major';
    const num = document.createElement('em');
    num.textContent = f;
    mark.append(tick, num);
  }
  ruler.append(mark);
}
```
